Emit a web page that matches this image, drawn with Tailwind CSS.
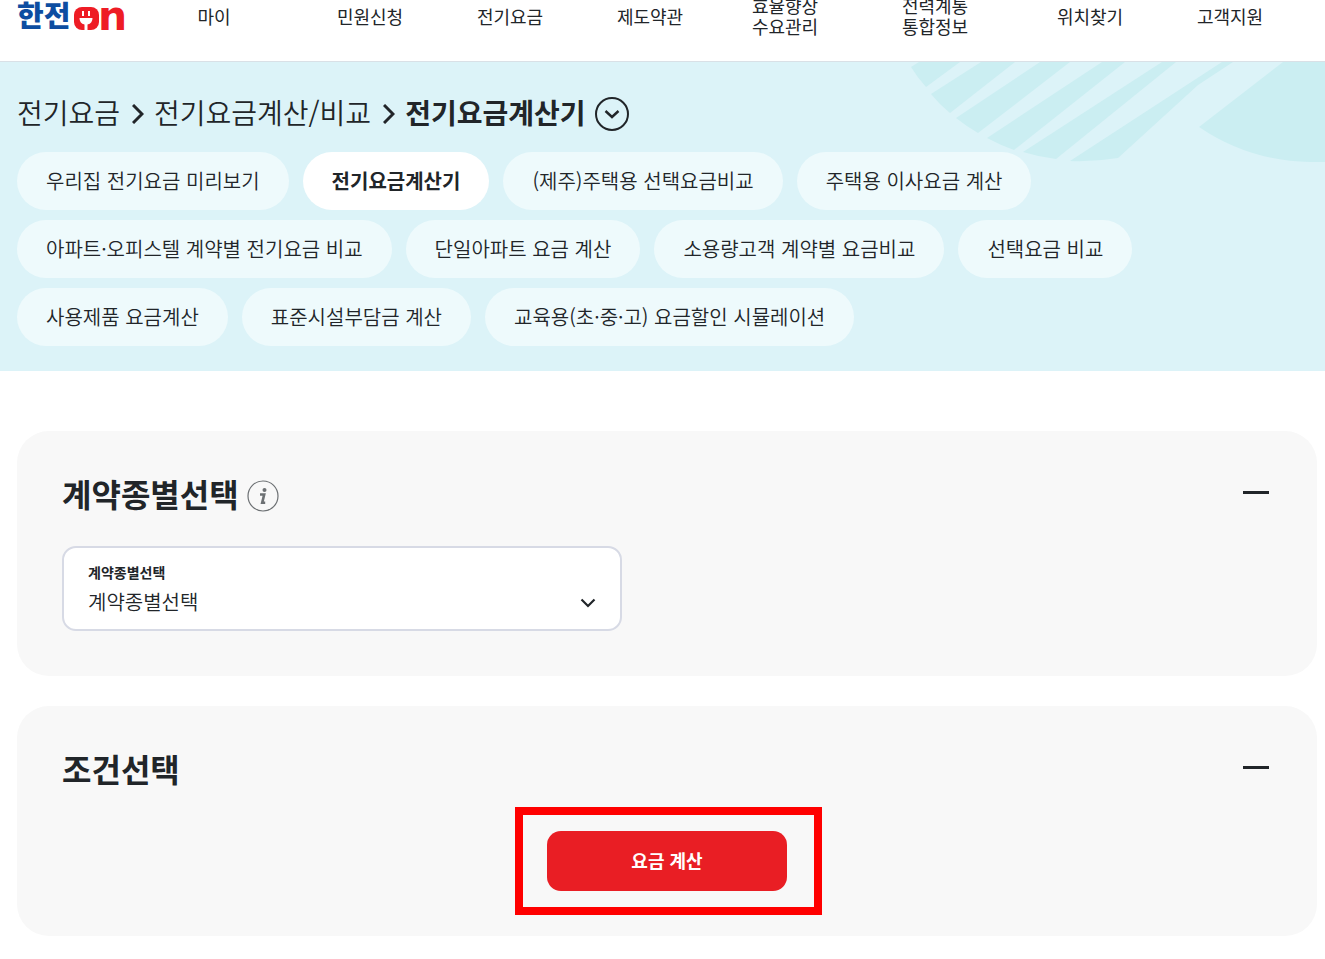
<!DOCTYPE html>
<html lang="ko">
<head>
    <meta charset="UTF-8">
    <meta name="viewport" content="width=device-width, initial-scale=1.0">
    <title>한전ON - 전기요금계산기</title>
    <script src="https://cdn.jsdelivr.net/npm/@tailwindcss/browser@4"></script>
</head>
<body class="bg-white text-[#212529] font-['Noto_Sans_CJK_KR',sans-serif]">
    <!-- Header -->
    <header class="border-b border-[#d9e0e6] bg-white pb-[29px]">
        <div class="flex h-8 items-center pr-[25px] pl-[17px]">
            <a href="#" aria-label="한전ON" class="block w-[111px] shrink-0">
                <svg class="block h-8 w-[111px]" viewBox="0 0 111 32">
                    <text x="0" y="27" font-size="29" font-weight="900" fill="#0d4da1">한전</text>
                    <rect x="57" y="7" width="25" height="23" rx="8" fill="#ee1c25"/>
                    <path d="M65 11h2v5h-2zM71 11h2v5h-2z" fill="#fff"/>
                    <path d="M62.500 18h13a6.500 6.500 0 0 1-5 6.500v6h-3v-6a6.500 6.500 0 0 1-5-6.500z" fill="#fff"/>
                    <text x="81" y="30" font-family="DejaVu Sans" font-size="41" font-weight="700" fill="#ee1c25">n</text>
                </svg>
            </a>
            <nav class="grid grow grid-cols-[172fr_140fr_140fr_140fr_130fr_170fr_140fr_140fr] items-center text-center text-lg leading-[21px]">
                <a href="#">마이</a>
                <a href="#">민원신청</a>
                <a href="#">전기요금</a>
                <a href="#">제도약관</a>
                <a href="#">효율향상<br>수요관리</a>
                <a href="#">전력계통<br>통합정보</a>
                <a href="#">위치찾기</a>
                <a href="#">고객지원</a>
            </nav>
        </div>
    </header>

    <!-- Breadcrumb + tabs -->
    <section class="relative bg-[#dcf3f8] pt-[31px] pr-2 pb-[25px] pl-[17px]">
        <svg class="absolute top-0 right-0 h-[100px] w-[420px]" viewBox="0 0 420 100" fill="#cbeef2" aria-hidden="true">
            <path d="M6 5L14 0H55L21 25Q12 15 6 5z"/>
            <path d="M76 0H110L45 51Q34 42 26 32z"/>
            <path d="M135 0H165L73 71Q61 64 51 56z"/>
            <path d="M197 0H220L109 88Q95 83 82 76z"/>
            <path d="M257 0H271L151 97Q134 95 118 90z"/>
            <path d="M317 0H328L293 23L213 96Q189 100 165 99z"/>
            <path d="M378 0H420V100H405Q344 99 294 65z"/>
        </svg>

        <div class="relative flex h-[42px] items-center text-[28px] leading-10">
            <a href="#" class="pb-1 font-[350]">전기요금</a>
            <svg class="mr-2.5 ml-3 h-5 w-3" viewBox="0 0 12 20" fill="none" stroke="#212529" stroke-width="3"><path d="M1 1l9 9-9 9"/></svg>
            <a href="#" class="pb-1 font-[350]">전기요금계산/비교</a>
            <svg class="mr-2.5 ml-3 h-5 w-3" viewBox="0 0 12 20" fill="none" stroke="#212529" stroke-width="3"><path d="M1 1l9 9-9 9"/></svg>
            <h1 class="pb-1 font-bold">전기요금계산기</h1>
            <button type="button" aria-label="메뉴 열기" class="ml-2.5">
                <svg class="block size-[34px]" viewBox="0 0 34 34" fill="none" stroke="#212529" stroke-width="2">
                    <circle cx="17" cy="17" r="16"/>
                    <path d="M10.500 14l6.500 6 6.500-6" stroke-width="2.4"/>
                </svg>
            </button>
        </div>

        <ul class="relative mt-[17px] flex flex-wrap gap-x-3.5 gap-y-2.5 text-xl leading-[58px] font-[350]">
            <li><a href="#" class="block rounded-full bg-[#eefafc] px-[29px]">우리집 전기요금 미리보기</a></li>
            <li><a href="#" class="block rounded-full bg-white px-[29px] font-bold">전기요금계산기</a></li>
            <li><a href="#" class="block rounded-full bg-[#eefafc] px-[29px]">(제주)주택용 선택요금비교</a></li>
            <li><a href="#" class="block rounded-full bg-[#eefafc] px-[29px]">주택용 이사요금 계산</a></li>
            <li><a href="#" class="block rounded-full bg-[#eefafc] px-[29px]">아파트·오피스텔 계약별 전기요금 비교</a></li>
            <li><a href="#" class="block rounded-full bg-[#eefafc] px-[29px]">단일아파트 요금 계산</a></li>
            <li><a href="#" class="block rounded-full bg-[#eefafc] px-[29px]">소용량고객 계약별 요금비교</a></li>
            <li><a href="#" class="block rounded-full bg-[#eefafc] px-[29px]">선택요금 비교</a></li>
            <li><a href="#" class="block rounded-full bg-[#eefafc] px-[29px]">사용제품 요금계산</a></li>
            <li><a href="#" class="block rounded-full bg-[#eefafc] px-[29px]">표준시설부담금 계산</a></li>
            <li><a href="#" class="block rounded-full bg-[#eefafc] px-[29px]">교육용(초·중·고) 요금할인 시뮬레이션</a></li>
        </ul>
    </section>

    <main class="space-y-[30px] pt-[60px] pr-2 pb-[23px] pl-[17px]">
        <!-- Contract type -->
        <section class="rounded-[32px] bg-[#f8f8f8] p-[45px]">
            <div class="flex items-start justify-between">
                <div class="flex items-center gap-2">
                    <h2 class="pb-1.5 text-[32px] leading-[34px] font-bold">계약종별선택</h2>
                    <button type="button" aria-label="도움말">
                        <svg class="block size-8" viewBox="0 0 32 32">
                            <circle cx="16" cy="16" r="15" fill="none" stroke="#6c7073" stroke-width="1.2"/>
                            <circle cx="17.500" cy="10" r="2" fill="#6c7073"/>
                            <path d="M13 14.500h4.200l-2 8.200h3" fill="none" stroke="#6c7073" stroke-width="2.600"/>
                        </svg>
                    </button>
                </div>
                <button type="button" aria-label="접기" class="flex h-[33px] items-center px-[3px]"><span class="h-[3px] w-[26px] bg-[#212529]"></span></button>
            </div>
            <div class="relative mt-[30px] h-[85px] max-w-[560px] rounded-[14px] border-2 border-[#d7dae5] bg-white px-6 pt-3.5">
                <label for="contract" class="block text-sm leading-5 font-bold">계약종별선택</label>
                <select id="contract" class="block h-10 w-full appearance-none bg-transparent text-xl font-[350] outline-none">
                    <option>계약종별선택</option>
                </select>
                <svg class="pointer-events-none absolute right-6 bottom-5 h-3 w-4" viewBox="0 0 16 12" fill="none" stroke="#212529" stroke-width="2.2"><path d="M1.500 2.500l6.500 6.500 6.500-6.500"/></svg>
            </div>
        </section>

        <!-- Conditions -->
        <section class="rounded-[32px] bg-[#f8f8f8] p-[45px]">
            <div class="flex items-start justify-between">
                <h2 class="pb-1.5 text-[32px] leading-[34px] font-bold">조건선택</h2>
                <button type="button" aria-label="접기" class="flex h-[33px] items-center px-[3px]"><span class="h-[3px] w-[26px] bg-[#212529]"></span></button>
            </div>
            <div class="relative mx-auto mt-10 w-60">
                <button type="button" class="block h-[60px] w-full rounded-[14px] bg-[#e91e24] pb-0.5 text-lg font-bold text-white">요금 계산</button>
                <div class="pointer-events-none absolute -top-6 -right-[35px] -bottom-6 -left-8 border-8 border-[#ff0000]"></div>
            </div>
        </section>
    </main>
</body>
</html>
